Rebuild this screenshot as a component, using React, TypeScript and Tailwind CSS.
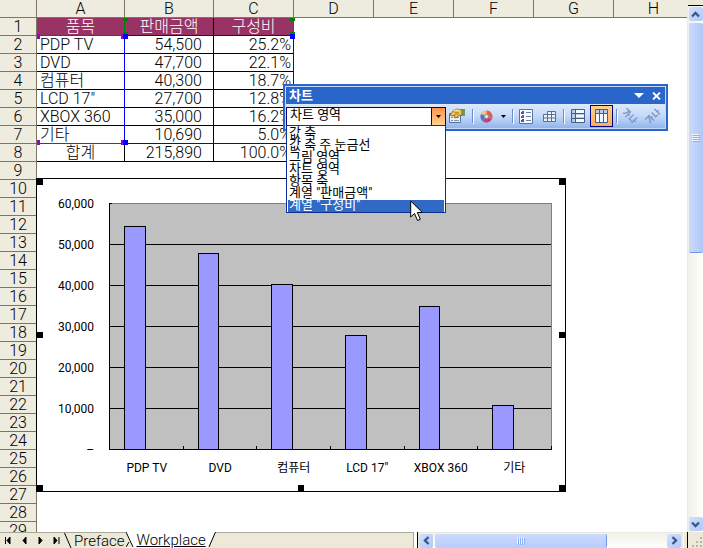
const UI = 'font-[Roboto,"Noto_Sans_CJK_KR","Liberation_Sans",sans-serif]';

type Row = { name: string; amount: string; share: string; center?: boolean };

const rows: Row[] = [
  { name: 'PDP TV', amount: '54,500', share: '25.2%' },
  { name: 'DVD', amount: '47,700', share: '22.1%' },
  { name: '컴퓨터', amount: '40,300', share: '18.7%' },
  { name: 'LCD 17"', amount: '27,700', share: '12.8%' },
  { name: 'XBOX 360', amount: '35,000', share: '16.2%' },
  { name: '기타', amount: '10,690', share: '5.0%' },
  { name: '합계', amount: '215,890', share: '100.0%', center: true },
];

const emptyRows = Array.from({ length: 21 }, (_, i) => i + 9);

const head = 'h-[18px] border-r border-b border-[#7b7762] bg-[#eeebdf] p-0 text-center font-light';
const title = 'h-[18px] border-b border-r border-black bg-[#993366] p-0 text-center font-light text-white';

function Sheet() {
  return (
    <table className="w-full table-fixed border-separate border-spacing-0 text-base leading-[17px] font-light">
      <colgroup>
        <col className="w-[37px]" />
        <col className="w-[88px]" />
        <col className="w-[89px]" />
        <col className="w-[80px]" />
        <col className="w-[80px]" />
        <col className="w-[80px]" />
        <col className="w-[80px]" />
        <col className="w-[80px]" />
        <col />
      </colgroup>
      <thead>
        <tr>
          <td className={head} />
          {['A', 'B', 'C', 'D', 'E', 'F', 'G'].map((c) => (
            <th key={c} scope="col" className={head}>{c}</th>
          ))}
          <th scope="col" className="h-[18px] border-b border-[#7b7762] bg-[#eeebdf] p-0 pl-[6px] text-center font-light">H</th>
        </tr>
      </thead>
      <tbody>
        <tr>
          <th scope="row" className={head}>1</th>
          <th className={title}>품목</th>
          <th className={title}>판매금액</th>
          <th className={title}>구성비</th>
          <td colSpan={5} className="p-0" />
        </tr>
        {rows.map((r, i) => (
          <tr key={r.name}>
            <th scope="row" className={head}>{i + 2}</th>
            <td className={`h-[18px] border-r border-b border-black p-0 ${r.center ? 'text-center' : 'pl-[3px] text-left'}`}>{r.name}</td>
            <td className="h-[18px] border-r border-b border-black p-0 pr-[11px] text-right">{r.amount}</td>
            <td className="h-[18px] border-r border-b border-black p-0 pr-[2px] text-right">{r.share}</td>
            <td colSpan={5} className="p-0" />
          </tr>
        ))}
        {emptyRows.map((n) => (
          <tr key={n}>
            <th scope="row" className={head}>{n}</th>
            <td colSpan={8} className="p-0" />
          </tr>
        ))}
      </tbody>
    </table>
  );
}

function RangeMarks() {
  return (
    <svg className="pointer-events-none absolute top-[17px] left-[36px]" width="260" height="130" viewBox="36 17 260 130" shapeRendering="crispEdges" aria-hidden="true">
      <path d="M37 35.5h88M37 143.5h88" stroke="#9900cc" />
      <path d="M124.5 18v17M293.5 18v17" stroke="#008000" />
      <path d="M124.5 35v108M293.5 35v108M124 35.5h170M124 143.5h170" stroke="#0000ff" />
      <path d="M37 34h3v5h-3zM121 34h3v5h-3zM37 140h3v5h-3zM121 140h3v5h-3z" fill="#9900cc" />
      <path d="M123 18h5v3h-5zM290 18h5v3h-5zM123 32h5v3h-5zM290 32h5v3h-5z" fill="#008000" />
      <path d="M123 34h5v5h-5zM290 34h5v5h-5zM123 140h5v5h-5zM290 140h5v5h-5z" fill="#0000ff" />
    </svg>
  );
}

const bars = [
  { label: 'PDP TV', x: 124, w: 22, y: 226 },
  { label: 'DVD', x: 198, w: 21, y: 253 },
  { label: '컴퓨터', x: 271, w: 22, y: 284 },
  { label: 'LCD 17"', x: 345, w: 22, y: 335 },
  { label: 'XBOX 360', x: 419, w: 21, y: 306 },
  { label: '기타', x: 492, w: 22, y: 405 },
];

const scale = ['60,000', '50,000', '40,000', '30,000', '20,000', '10,000', '–'];

function Chart() {
  return (
    <figure className="absolute top-[178px] left-[36px] flex w-[530px] flex-col border border-black bg-white text-xs leading-[14px]">
      <div className="flex pt-[18px]">
        <div className="flex w-[57px] flex-col items-end gap-[27px]">
          {scale.map((s) => (
            <span key={s}>{s}</span>
          ))}
        </div>
        <svg className="mt-[6px] ml-[15px]" width="443" height="247" viewBox="109 203 443 247" shapeRendering="crispEdges" role="img" aria-label="판매금액">
          <path d="M109 203h443v247h-443z" fill="#c0c0c0" />
          <path d="M109 203.5h442.500v246" fill="none" stroke="#808080" />
          <path d="M109 244.500h442M109 285.500h442M109 326.500h442M109 367.500h442M109 408.500h442" stroke="#000" />
          {bars.map((b) => (
            <rect key={b.label} x={b.x + 0.5} y={b.y + 0.5} width={b.w - 1} height={449 - b.y} fill="#9999ff" stroke="#000" />
          ))}
          <path d="M112 203.500h-2.500v246h442M183.500 446v4M256.500 446v4M330.500 446v4M404.500 446v4M477.500 446v4M551.500 446v4" fill="none" stroke="#000" />
        </svg>
      </div>
      <figcaption className="ml-[73px] grid w-[441px] grid-cols-6 pt-[4px] pb-[16px] text-center">
        {bars.map((b) => (
          <span key={b.label}>{b.label}</span>
        ))}
      </figcaption>
      <svg className="pointer-events-none absolute inset-0" width="528" height="312" viewBox="37 179 528 312" aria-hidden="true">
        <path d="M37 179h6v6h-6zM298 179h6v6h-6zM559 179h6v6h-6zM37 332h6v6h-6zM559 332h6v6h-6zM37 485h6v6h-6zM298 485h6v6h-6zM559 485h6v6h-6z" />
      </svg>
    </figure>
  );
}

const options = ['값 축', '값 축 주 눈금선', '그림 영역', '차트 영역', '항목 축', '계열 "판매금액"', '계열 "구성비"'];

function Divider() {
  return <span className="h-[14px] w-px bg-[#6a8ccb] shadow-[1px_1px_0_#fff]" />;
}

function TiltedLetters({ angle }: { angle: number }) {
  return (
    <svg width="16" height="16" viewBox="-8 -8 16 16" fill="none" stroke="#7a93c4" strokeWidth="1.300">
      <path transform={`rotate(${angle})`} d="M-8-3h4q0 4-3 6M-2.500-4v8M-2.500 0h2M1.500-3.500v6h3M6-4v8M6 0h2" />
    </svg>
  );
}

function ToolbarWindow() {
  return (
    <section aria-label="차트" className="absolute top-[84px] left-[283px] w-[385px] border-2 border-[#2a66c9] bg-[#2a66c9]">
      <div className="border border-[#c4dafa]">
        <header className="flex h-[17px] items-center bg-[#2a66c9] pr-[4px] pl-[3px] text-white">
          <h2 className="flex-1 text-[13px] leading-[14px] font-bold">차트</h2>
          <button type="button" aria-label="도구 모음 옵션" className="mr-[8px]">
            <svg width="10" height="6"><path d="M0 0h10L5 5z" fill="#fff" /></svg>
          </button>
          <button type="button" aria-label="닫기">
            <svg width="9" height="8"><path d="M1 0.500l7 7M8 0.500l-7 7" stroke="#fff" strokeWidth="1.800" /></svg>
          </button>
        </header>
        <div className="flex h-[24px] items-center bg-linear-to-b from-[#dde9fb] via-[#c4d9f9] to-[#93b5ea]">
          <div className="relative flex h-[19px] w-[160px] border border-[#000080] bg-white">
            <input aria-label="차트 개체" defaultValue="차트 영역" className="w-full min-w-0 flex-1 bg-white pb-[3px] pl-[3px] text-[13px] leading-[14px] outline-none" />
            <button type="button" aria-label="목록 열기" className="flex w-[14px] items-center justify-center border-l border-[#000080] bg-linear-to-b from-[#fe914e] to-[#ffd28f]">
              <svg width="5" height="3"><path d="M0 0h5L2.500 3z" /></svg>
            </button>
          </div>
          <button type="button" aria-label="개체 서식" className="flex h-[22px] w-[26px] items-center pl-[2px]">
            <svg width="18" height="16" viewBox="0 0 18 16">
              <path d="M1.500 5.500h11v9h-11z" fill="#e8f0fc" stroke="#5d7196" />
              <path d="M3 9.500h2M6 9.500h5M3 12.500h2M6 12.500h5" stroke="#7c91b8" />
              <path d="M13 1h4v7h-4z" fill="#5fa06a" />
              <path d="M2 7l3-4 4-2 5 1v5l-4 1-2 2-2-1 1-2-3 1z" fill="#f0c548" stroke="#7b5a16" strokeWidth=".8" />
              <path d="M6 4l5 1M7 6h4" stroke="#9a711c" strokeWidth=".7" />
              <path d="M6 3l3-1 3 .5" stroke="#fff3a8" fill="none" />
            </svg>
          </button>
          <Divider />
          <button type="button" aria-label="차트 종류" className="flex h-[22px] w-[39px] items-center pl-[7px] gap-[8px]">
            <svg width="13" height="13" viewBox="0 0 13 13" fill="none">
              <g strokeWidth="4">
                <path d="M6.500 2.500A4 4 0 0 1 10 8.500" stroke="#e0604a" />
                <path d="M10 8.500A4 4 0 0 1 4 9.700" stroke="#c83f6c" />
                <path d="M4 9.700A4 4 0 0 1 3 4.500" stroke="#5b6fc4" />
                <path d="M3 4.500A4 4 0 0 1 6.500 2.500" stroke="#f0b848" />
              </g>
              <path d="M2 5a5 5 0 0 1 3-3" stroke="#fff" opacity=".5" />
              <circle cx="6.500" cy="6.500" r="2" fill="#dbe8fc" stroke="#7d6f98" strokeWidth=".6" />
            </svg>
            <svg width="5" height="3"><path d="M0 0h5L2.500 3z" /></svg>
          </button>
          <Divider />
          <button type="button" aria-label="범례" className="flex h-[22px] w-[22px] items-center justify-center pl-[3px]">
            <svg width="14" height="15" viewBox="0 0 14 15">
              <path d="M.5.5h13v14H.5z" fill="#f7faff" stroke="#5873a8" />
              <path d="M7 3.500h5M7 7.500h5M7 11.500h5" stroke="#6b7fa8" />
              <path d="M2 2h3v3H2z" fill="#375ed0" />
              <path d="M2 6h3v3H2z" fill="#d63a2c" />
              <path d="M2 10h3v3H2z" fill="#3b57c4" />
              <path d="M2 2h1v1H2zM2 6h1v1H2zM2 10h1v1H2z" fill="#fff" />
            </svg>
          </button>
          <button type="button" aria-label="데이터 표" className="flex h-[22px] w-[28px] items-center justify-center">
            <svg width="13" height="11" viewBox="0 0 13 11">
              <path d="M4.500.5h8v3h-8zM.5 3.500h12v7H.5zM4.500 3.500v7M8.500.5v10M.5 7h12" fill="#edf4ff" stroke="#587099" />
            </svg>
          </button>
          <Divider />
          <button type="button" aria-label="행 방향" className="flex h-[22px] w-[26px] items-center justify-center pl-[2px]">
            <svg width="14" height="14" viewBox="0 0 14 14">
              <path d="M.5.5h13v13H.5z" fill="#b8cbe8" />
              <path d="M5 1h8v3H5zM5 6h8v2H5zM5 10h8v3H5z" fill="#f4f8ff" />
              <path d="M.5.5h13v13H.5zM4.500.5v13M.5 4.500h13M.5 9.500h13" fill="none" stroke="#485f85" />
            </svg>
          </button>
          <button type="button" aria-label="열 방향" aria-pressed="true" className="flex h-[22px] w-[23px] items-center justify-center border border-[#000080] bg-linear-to-b from-[#ffd18b] to-[#ffab56]">
            <svg width="13" height="14" viewBox="0 0 13 14">
              <path d="M.5.5h12v13H.5z" fill="#b8cbe8" />
              <path d="M1 5h3v8H1zM5 5h3v8H5zM9 5h3v8H9z" fill="#f4f8ff" />
              <path d="M.5.5h12v13H.5zM4.500.5v13M8.500.5v13M.5 4.500h12" fill="none" stroke="#485f85" />
            </svg>
          </button>
          <span className="w-[3px]" />
          <Divider />
          <button type="button" disabled aria-label="시계 방향 각도" className="flex h-[22px] w-[24px] items-center justify-center pl-[2px]">
            <TiltedLetters angle={45} />
          </button>
          <button type="button" disabled aria-label="시계 반대 방향 각도" className="flex h-[22px] w-[23px] items-center justify-center">
            <TiltedLetters angle={-45} />
          </button>
        </div>
      </div>
      <ul role="listbox" aria-label="차트 개체 목록" className="absolute top-[39px] left-px flex w-[160px] flex-col border border-[#0a3296] bg-white px-px pt-[2px] text-[13px] leading-[10px]">
        {options.map((o, i) => (
          <li key={o} role="option" aria-selected={i === 6} className={i === 6 ? 'h-[12px] bg-[#316ac5] pl-px text-white' : 'h-[12px] pl-px'}>{o}</li>
        ))}
      </ul>
      <svg className="pointer-events-none absolute top-[114px] left-[125px]" width="14" height="22" viewBox="0 0 14 22" aria-hidden="true">
        <path d="M.7 1v16l3.800-3.500 3 7 2.800-1.200-3-6.800h5z" fill="#fff" stroke="#000" />
      </svg>
    </section>
  );
}

function Arrow({ d }: { d: string }) {
  return (
    <svg width="9" height="9" viewBox="0 0 9 9" fill="none" stroke="#3e5788" strokeWidth="2.400">
      <path d={d} />
    </svg>
  );
}

const scrollButton = 'flex h-[14px] w-[14px] shrink-0 items-center justify-center rounded-[2px] bg-linear-to-br from-[#d3e0ff] to-[#b0c8f8]';

function VerticalScroll() {
  return (
    <div className="flex w-[16px] shrink-0 flex-col items-center border-l border-[#ece9dd] bg-linear-to-r from-[#f1f0ea] to-[#fefefb]">
      <div className="mb-px h-[6px] w-full shrink-0 border-b border-black bg-[#ece9d8]" />
      <button type="button" aria-label="위로" className={scrollButton}><Arrow d="M1 6.500l3.500-3.500L8 6.500" /></button>
      <div className="mt-[2px] flex h-[230px] w-[14px] shrink-0 flex-col items-center justify-center gap-px rounded-[2px] border-b border-[#6f98e8] bg-linear-to-r from-[#cbdafe] to-[#b0c8f8]">
        <span className="h-px w-[7px] bg-[#eef4fe] shadow-[1px_1px_0_#8cb0f8]" />
        <span className="h-px w-[7px] bg-[#eef4fe] shadow-[1px_1px_0_#8cb0f8]" />
        <span className="h-px w-[7px] bg-[#eef4fe] shadow-[1px_1px_0_#8cb0f8]" />
        <span className="h-px w-[7px] bg-[#eef4fe] shadow-[1px_1px_0_#8cb0f8]" />
      </div>
      <div className="flex-1" />
      <button type="button" aria-label="아래로" className={scrollButton}><Arrow d="M1 2.500L4.500 6 8 2.500" /></button>
      <div className="h-px shrink-0" />
    </div>
  );
}

const nav = [
  { label: '첫 시트', d: 'M1.500 1v7M6 1v7L3 4.500z' },
  { label: '이전 시트', d: 'M6 1v7L3 4.500z' },
  { label: '다음 시트', d: 'M3 1v7l3-3.500z' },
  { label: '마지막 시트', d: 'M2 1v7l3-3.500zM7 1v7' },
];

function SheetBar() {
  return (
    <footer className="flex h-[16px] shrink-0 bg-[#ece9d8]">
      <div className="flex flex-1">
        <div className="flex w-[64px] border-t border-[#aca899]">
          {nav.map((n) => (
            <button key={n.label} type="button" aria-label={n.label} className="flex flex-1 items-center justify-center">
              <svg width="9" height="9" viewBox="0 0 9 9" stroke="#000"><path d={n.d} strokeWidth="1" /></svg>
            </button>
          ))}
        </div>
        <nav className="flex text-[15px] leading-[14px] font-light">
          <svg width="8" height="16" className="border-t border-[#aca899]"><path d="M.5 0L7 15" stroke="#000" /></svg>
          <button type="button" className="h-[16px] border-t border-[#aca899] px-[2px]">Preface</button>
          <svg width="8" height="16" className="bg-white"><path d="M0 0v15h6z" fill="#ece9d8" /><path d="M0 0l7 15M3 10l-3 5" stroke="#000" fill="none" /></svg>
          <button type="button" className="h-[16px] bg-white px-[2px] underline underline-offset-1">Workplace</button>
          <svg width="8" height="16"><path d="M0 0h8L1 15H0z" fill="#fff" /><path d="M7.500 0L1 15" stroke="#000" /></svg>
        </nav>
        <div className="flex-1 border-t border-[#aca899]" />
      </div>
      <div className="flex w-[290px] shrink-0">
        <span className="w-[4px] border-l border-[#aca899] bg-white" />
        <span className="mr-px w-px bg-black" />
        <div className="flex flex-1 items-center border-t border-[#ece9dd] bg-linear-to-b from-[#f1f0ea] to-[#fefefb]">
          <button type="button" aria-label="왼쪽으로" className={scrollButton}><Arrow d="M6.500 1L3 4.500 6.500 8" /></button>
          <div className="ml-[2px] flex h-[14px] w-[172px] items-center justify-center gap-px rounded-[2px] border-r border-[#6f98e8] bg-linear-to-b from-[#cbdafe] to-[#b8cdfb]">
            <span className="h-[7px] w-px bg-[#eef4fe] shadow-[1px_1px_0_#8cb0f8]" />
            <span className="h-[7px] w-px bg-[#eef4fe] shadow-[1px_1px_0_#8cb0f8]" />
            <span className="h-[7px] w-px bg-[#eef4fe] shadow-[1px_1px_0_#8cb0f8]" />
            <span className="h-[7px] w-px bg-[#eef4fe] shadow-[1px_1px_0_#8cb0f8]" />
          </div>
          <div className="flex-1" />
          <button type="button" aria-label="오른쪽으로" className={scrollButton}><Arrow d="M2.500 1L6 4.500 2.500 8" /></button>
        </div>
        <span className="ml-[2px] w-[4px] border-l border-white" />
        <span className="w-px bg-black" />
        <svg width="15" height="16" fill="#b8b4a2"><path d="M12 5h2v2h-2zM8 9h2v2H8zM12 9h2v2h-2zM4 13h2v2H4zM8 13h2v2H8zM12 13h2v2h-2z" /></svg>
      </div>
    </footer>
  );
}

export default function App() {
  return (
    <main className={`flex h-screen flex-col overflow-hidden bg-white text-black ${UI}`}>
      <div className="flex min-h-0 flex-1">
        <div className="relative min-w-0 flex-1 overflow-hidden">
          <Sheet />
          <RangeMarks />
          <Chart />
          <ToolbarWindow />
        </div>
        <VerticalScroll />
      </div>
      <SheetBar />
    </main>
  );
}
